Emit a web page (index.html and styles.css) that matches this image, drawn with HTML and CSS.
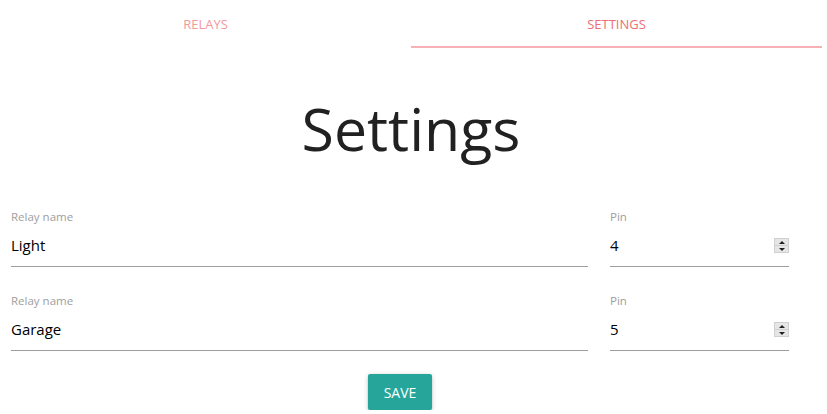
FILE: index.html
```html
<!DOCTYPE html>
<html>
<head>
<meta charset="utf-8">
<link rel="stylesheet" href="styles.css">
</head>
<body>
<nav class="tabs">
  <a class="tab">RELAYS</a>
  <a class="tab active">SETTINGS</a>
</nav>
<h1 class="title">Settings</h1>
<form class="form">
  <div class="row">
    <div class="field name">
      <label class="label">Relay name</label>
      <div class="control"><input class="input" type="text" value="Light"></div>
    </div>
    <div class="field pin">
      <label class="label">Pin</label>
      <div class="control"><input class="input" type="text" value="4"><span class="spin"><span class="up"></span><span class="down"></span></span></div>
    </div>
  </div>
  <div class="row">
    <div class="field name">
      <label class="label">Relay name</label>
      <div class="control"><input class="input" type="text" value="Garage"></div>
    </div>
    <div class="field pin">
      <label class="label">Pin</label>
      <div class="control"><input class="input" type="text" value="5"><span class="spin"><span class="up"></span><span class="down"></span></span></div>
    </div>
  </div>
  <div class="actions">
    <button class="btn" type="button">SAVE</button>
  </div>
</form>
</body>
</html>
```
FILE: styles.css
```css
html, body { margin: 0; padding: 0; background: #fff; }
body { font-family: "Open Sans", "Noto Sans", sans-serif; color: rgba(0,0,0,0.87); width: 822px; }
.tabs { display: flex; height: 48px; }
.tab { flex: 1; text-align: center; line-height: 48px; font-size: 13px; color: #ee6e73; opacity: 0.7; }
.tab.active { opacity: 1; border-bottom: 2px solid #f6b2b5; height: 46px; }
.title { margin: 45px 0 0; text-align: center; font-weight: 400; font-size: 59px; line-height: 70px; color: #212121; }
.form { margin-top: 47px; width: 800px; display: flex; flex-direction: column; gap: 27px; }
.row { display: flex; }
.field { padding: 0 11px; box-sizing: border-box; }
.field.name { width: 599px; }
.field.pin { width: 201px; }
.label { display: block; font-size: 11.5px; line-height: 14px; color: #9e9e9e; }
.control { display: flex; align-items: center; border-bottom: 1px solid #9e9e9e; height: 42px; }
.input { flex: 1; border: 0; outline: 0; padding: 0; margin: 0; font: inherit; font-size: 15px; color: #000; background: transparent; min-width: 0; }
.spin { display: flex; flex-direction: column; width: 15px; height: 15px; }
.up, .down { flex: 1; background: #e6e6e6; border: 1px solid #d0d0d0; position: relative; }
.down { border-top: 0; }
.up::after, .down::after { content: ""; position: absolute; left: 4px; top: 2px; border-left: 3px solid transparent; border-right: 3px solid transparent; }
.up::after { border-bottom: 3px solid #222; }
.down::after { border-top: 3px solid #222; }
.actions { display: flex; justify-content: center; margin-top: -4px; }
.btn { height: 36px; padding: 0 16px; border: 0; border-radius: 2px; background: #26a69a; color: #fff; font: inherit; font-size: 14px; box-shadow: 0 2px 2px 0 rgba(0,0,0,0.14), 0 3px 1px -2px rgba(0,0,0,0.12), 0 1px 5px 0 rgba(0,0,0,0.2); }
```
